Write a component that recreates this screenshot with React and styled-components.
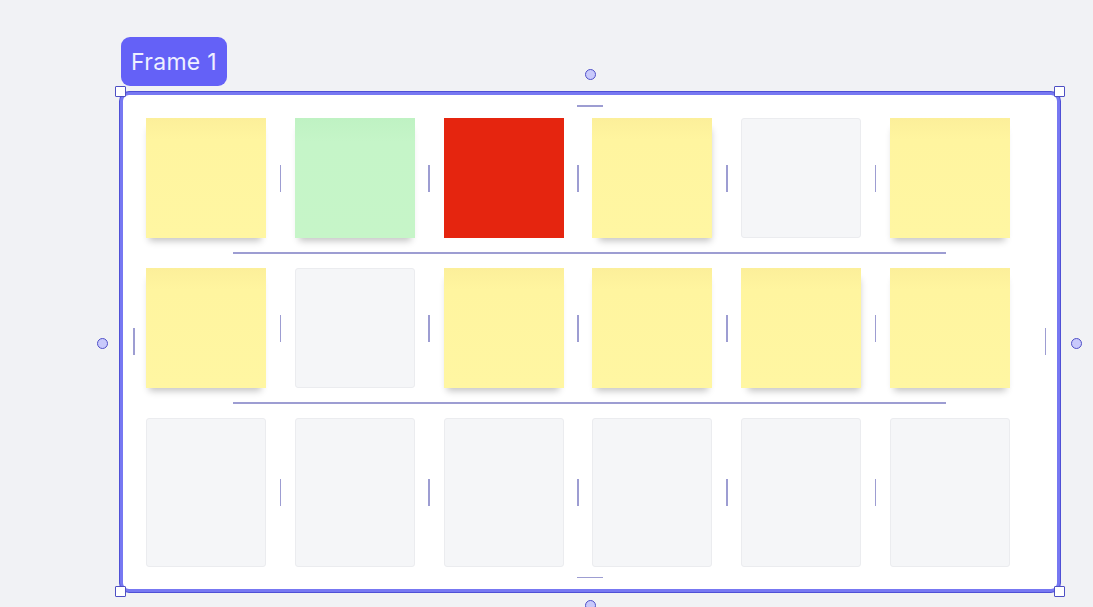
import React from "react";
import styled, { createGlobalStyle } from "styled-components";

const GlobalStyle = createGlobalStyle`
  body {
    margin: 0;
    background: #f1f2f5;
    font-family: Inter, "Noto Sans", sans-serif;
  }
`;

const Page = styled.div`
  width: 1093px;
  height: 607px;
  overflow: hidden;
  padding: 37px 0 0 120px;
  box-sizing: border-box;
`;

const Label = styled.div`
  display: inline-flex;
  align-items: center;
  justify-content: center;
  width: 106px;
  height: 49px;
  margin-left: 1px;
  margin-bottom: 6px;
  border-radius: 9px;
  background: #6461f7;
  color: #eef0ff;
  font-size: 23px;
  letter-spacing: 0.3px;
`;

const Frame = styled.div`
  position: relative;
  width: 940px;
  height: 500px;
  box-sizing: border-box;
  padding: 23px;
  background: #fff;
  border: 3px solid #7778f2;
  border-radius: 9px;
  box-shadow: 0 0 0 1px #4f50d6;
`;

const Handle = styled.div`
  position: absolute;
  width: 9px;
  height: 9px;
  background: #fff;
  border: 1.5px solid #4e4fc4;
  border-radius: 1px;
  ${({ $top }) => ($top ? "top: -9px;" : "bottom: -8px;")}
  ${({ $left }) => ($left ? "left: -8px;" : "right: -8px;")}
`;

const Dot = styled.div`
  position: absolute;
  width: 9px;
  height: 9px;
  border-radius: 50%;
  background: #c8c9fb;
  border: 1.5px solid #5050c8;
  ${({ $pos }) =>
    ({
      top: "top: -26px; left: 462px;",
      bottom: "bottom: -22px; left: 462px;",
      left: "left: -26px; top: 243px;",
      right: "right: -25px; top: 243px;",
    }[$pos])}
`;

const EdgeMark = styled.div`
  position: absolute;
  background: #9d9dd2;
  ${({ $pos }) =>
    ({
      top: "top: 10px; left: 454px; width: 26px; height: 1.5px;",
      bottom: "bottom: 11px; left: 454px; width: 26px; height: 1.5px;",
      left: "left: 10px; top: 233px; width: 1.5px; height: 27px;",
      right: "right: 11px; top: 233px; width: 1.5px; height: 27px;",
    }[$pos])}
`;

const Row = styled.div`
  display: flex;
  align-items: stretch;
`;

const GapCell = styled.div`
  width: 28.8px;
  display: flex;
  align-items: center;
  justify-content: center;
`;

const VMark = styled.div`
  width: 1.5px;
  height: 27px;
  background: #9d9dd2;
`;

const RowGap = styled.div`
  height: 30px;
  display: flex;
  align-items: center;
`;

const HLine = styled.div`
  margin-left: 87px;
  width: 713px;
  height: 1.5px;
  background: #9d9dd2;
`;

const colors = {
  yellow: "linear-gradient(180deg, #fcef9a 0%, #fff59f 18%, #fff6a2 100%)",
  green: "linear-gradient(180deg, #bff2c3 0%, #c5f5c8 20%, #c6f5c8 100%)",
  red: "#e5250f",
};

const Note = styled.div`
  width: 120px;
  height: ${({ $tall }) => ($tall ? "149px" : "120px")};
  box-sizing: border-box;
  background: ${({ $color }) => colors[$color] || "#f5f6f8"};
  border: ${({ $color }) => ($color ? "none" : "1px solid #ebecef")};
  border-radius: ${({ $color }) => ($color ? "0" : "3px")};
  box-shadow: ${({ $color, $dx = 0 }) =>
    $color && $color !== "red"
      ? `${$dx}px 7px 7px -4px rgba(0, 0, 0, 0.24)`
      : "none"};
`;

const rows = [
  [
    { c: "yellow", dx: -1 },
    { c: "green", dx: 0 },
    { c: "red" },
    { c: "yellow", dx: 3 },
    {},
    { c: "yellow", dx: -1 },
  ],
  [
    { c: "yellow", dx: -1 },
    {},
    { c: "yellow", dx: -1 },
    { c: "yellow", dx: 0 },
    { c: "yellow", dx: 3 },
    { c: "yellow", dx: 0 },
  ],
  [{}, {}, {}, {}, {}, {}],
];

export default function App() {
  return (
    <Page>
      <GlobalStyle />
      <Label>Frame 1</Label>
      <Frame>
        <Handle $top $left />
        <Handle $top />
        <Handle $left />
        <Handle />
        <Dot $pos="top" />
        <Dot $pos="bottom" />
        <Dot $pos="left" />
        <Dot $pos="right" />
        <EdgeMark $pos="top" />
        <EdgeMark $pos="bottom" />
        <EdgeMark $pos="left" />
        <EdgeMark $pos="right" />
        {rows.map((row, ri) => (
          <React.Fragment key={ri}>
            {ri > 0 && (
              <RowGap>
                <HLine />
              </RowGap>
            )}
            <Row>
              {row.map((n, i) => (
                <React.Fragment key={i}>
                  {i > 0 && (
                    <GapCell>
                      <VMark />
                    </GapCell>
                  )}
                  <Note $color={n.c} $dx={n.dx} $tall={ri === 2} />
                </React.Fragment>
              ))}
            </Row>
          </React.Fragment>
        ))}
      </Frame>
    </Page>
  );
}
